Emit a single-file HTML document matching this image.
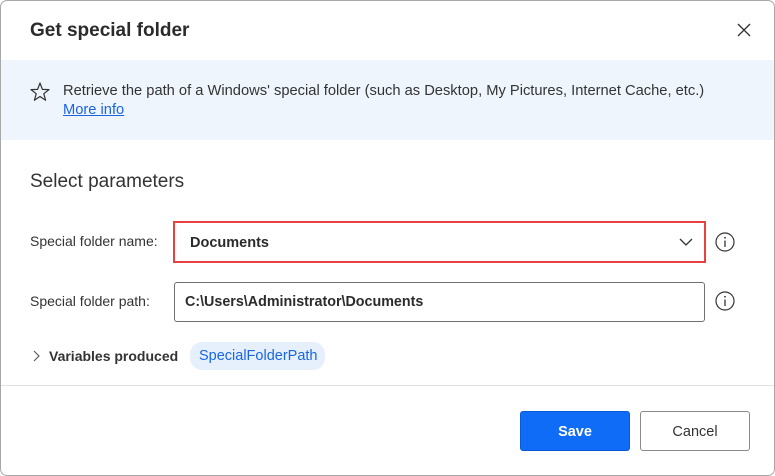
<!DOCTYPE html>
<html><head><style>
*{box-sizing:border-box;margin:0;padding:0}
body{width:775px;height:476px;background:#fff;font-family:"Liberation Sans",sans-serif;color:#242424;position:relative;overflow:hidden}
.frame{position:absolute;left:0;top:0;width:775px;height:476px;border:1px solid #a8a8a8;border-radius:7px}
.abs{position:absolute;white-space:nowrap}
</style></head><body>
<div class="frame"></div>
<div class="abs" style="left:30px;top:20px;font-size:19px;font-weight:bold;color:#2b2b2b">Get special folder</div>
<svg class="abs" style="left:737px;top:23px" width="14" height="14" viewBox="0 0 14 14"><path d="M1 1L13 13M13 1L1 13" stroke="#333" stroke-width="1.3"/></svg>
<div class="abs" style="left:1px;top:60px;width:773px;height:80px;background:#eff5fd"></div>
<svg class="abs" style="left:29px;top:81px" width="22" height="22" viewBox="0 0 22 22"><path d="M11 2L13.4 8.4L20 8.6L14.8 12.7L16.6 19.3L11 15.5L5.4 19.3L7.2 12.7L2 8.6L8.6 8.4Z" fill="none" stroke="#333" stroke-width="1.2" stroke-linejoin="round"/></svg>
<div class="abs" style="left:63px;top:83px;font-size:14.7px;color:#333">Retrieve the path of a Windows' special folder (such as Desktop, My Pictures, Internet Cache, etc.)</div>
<div class="abs" style="left:63px;top:102px;font-size:14.7px;color:#1a66e0;text-decoration:underline">More info</div>
<div class="abs" style="left:30px;top:171px;font-size:19px;color:#333">Select parameters</div>
<div class="abs" style="left:30px;top:233px;font-size:14px;color:#333">Special folder name:</div>
<div class="abs" style="left:173px;top:221px;width:533px;height:42px;border:2px solid #e8413f"></div>
<div class="abs" style="left:190px;top:235px;font-size:14.5px;font-weight:bold;color:#2b2b2b">Documents</div>
<svg class="abs" style="left:679px;top:238px" width="14" height="9" viewBox="0 0 14 9"><path d="M1 1L7 7L13 1" fill="none" stroke="#333" stroke-width="1.3"/></svg>
<svg class="abs" style="left:714px;top:231px" width="22" height="22" viewBox="0 0 22 22"><circle cx="11" cy="11" r="9" fill="none" stroke="#333" stroke-width="1.2"/><path d="M11 9.5V16" stroke="#333" stroke-width="1.3"/><circle cx="11" cy="6.8" r="0.9" fill="#333"/></svg>
<div class="abs" style="left:30px;top:293px;font-size:14px;color:#333">Special folder path:</div>
<div class="abs" style="left:174px;top:282px;width:531px;height:40px;border:1px solid #707070;border-radius:3px"></div>
<div class="abs" style="left:185px;top:294px;font-size:14.3px;font-weight:bold;color:#2b2b2b">C:\Users\Administrator\Documents</div>
<svg class="abs" style="left:714px;top:290px" width="22" height="22" viewBox="0 0 22 22"><circle cx="11" cy="11" r="9" fill="none" stroke="#333" stroke-width="1.2"/><path d="M11 9.5V16" stroke="#333" stroke-width="1.3"/><circle cx="11" cy="6.8" r="0.9" fill="#333"/></svg>
<svg class="abs" style="left:33px;top:350px" width="7" height="12" viewBox="0 0 7 12"><path d="M1 1L6 6L1 11" fill="none" stroke="#555" stroke-width="1.1"/></svg>
<div class="abs" style="left:49px;top:348px;font-size:14px;font-weight:bold;color:#333">Variables produced</div>
<div class="abs" style="left:190px;top:342px;width:135px;height:28px;background:#e6f0fd;border-radius:12px"></div>
<div class="abs" style="left:199px;top:348px;font-size:14.5px;color:#1a66e0">SpecialFolderPath</div>
<div class="abs" style="left:1px;top:385px;width:773px;height:1px;background:#e2e2e2"></div>
<div class="abs" style="left:520px;top:411px;width:110px;height:40px;background:#0f6cf6;border:1px solid #0a5ad8;border-radius:3px;color:#fff;font-weight:bold;font-size:14.5px;text-align:center;line-height:40px">Save</div>
<div class="abs" style="left:640px;top:411px;width:110px;height:40px;background:#fff;border:1px solid #8a8a8a;border-radius:3px;color:#333;font-size:14.5px;text-align:center;line-height:40px">Cancel</div>
</body></html>
